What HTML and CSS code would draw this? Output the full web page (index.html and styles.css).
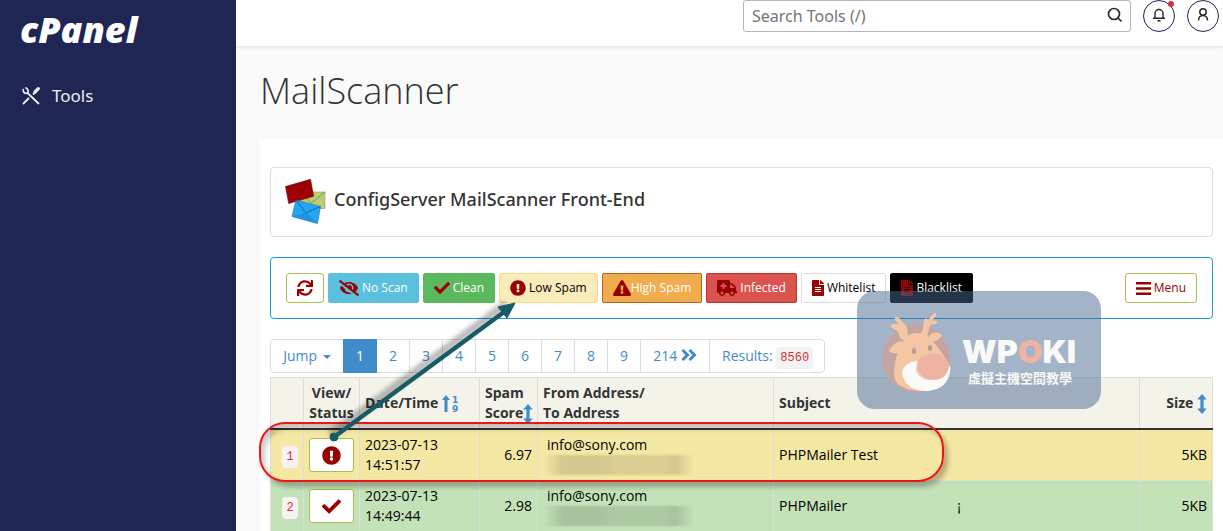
FILE: index.html
```html
<!DOCTYPE html>
<html lang="en">
<head>
  <meta charset="utf-8">
  <title>cPanel - MailScanner</title>
  <meta name="viewport" content="width=device-width, initial-scale=1">
  <link rel="stylesheet" href="styles.css">
</head>
<body>
  <svg class="sprite" aria-hidden="true">
    <symbol id="i-sync" viewBox="0 0 512 512"><path d="M440.65 12.57l4 82.77A247.16 247.16 0 0 0 255.83 8C134.73 8 33.91 94.92 12.29 209.82A12 12 0 0 0 24.09 224h49.05a12 12 0 0 0 11.67-9.26 175.91 175.91 0 0 1 317-56.94l-101.46-4.86a12 12 0 0 0-12.57 12v47.41a12 12 0 0 0 12 12H500a12 12 0 0 0 12-12V12a12 12 0 0 0-12-12h-47.37a12 12 0 0 0-11.98 12.57zM255.83 432a175.61 175.61 0 0 1-146-77.8l101.8 4.87a12 12 0 0 0 12.57-12v-47.4a12 12 0 0 0-12-12H12a12 12 0 0 0-12 12V500a12 12 0 0 0 12 12h47.35a12 12 0 0 0 12-12.6l-4.15-82.57A247.17 247.17 0 0 0 255.83 504c121.11 0 221.93-86.92 243.55-201.82a12 12 0 0 0-11.8-14.18h-49.05a12 12 0 0 0-11.67 9.26A175.86 175.86 0 0 1 255.83 432z"/></symbol>
    <symbol id="i-eye" viewBox="0 0 640 512"><path d="M320 400c-75.85 0-137.25-58.71-142.9-133.11L72.2 185.82c-13.79 17.3-26.48 35.59-36.72 55.59a32.35 32.35 0 0 0 0 29.19C89.71 376.41 197.07 448 320 448c26.91 0 52.87-4 77.89-10.46L346 397.39a144.13 144.13 0 0 1-26 2.61zm313.82 58.1l-110.55-85.44a331.25 331.25 0 0 0 81.25-102.07 32.35 32.35 0 0 0 0-29.19C550.29 135.59 442.93 64 320 64a308.15 308.15 0 0 0-147.32 37.7L45.46 3.37A16 16 0 0 0 23 6.18L3.37 31.45A16 16 0 0 0 6.18 53.9l588.36 454.73a16 16 0 0 0 22.46-2.81l19.64-25.27a16 16 0 0 0-2.82-22.45zm-183.72-142l-39.3-30.38A94.75 94.75 0 0 0 416 256a94.76 94.76 0 0 0-121.31-92.21A47.65 47.65 0 0 1 304 192a46.64 46.64 0 0 1-1.54 10l-73.61-56.89A142.31 142.31 0 0 1 320 112a143.92 143.92 0 0 1 144 144c0 21.63-5.29 41.79-13.9 60.11z"/></symbol>
    <symbol id="i-check" viewBox="0 0 512 512"><path d="M173.898 439.404l-166.4-166.4c-9.997-9.997-9.997-26.206 0-36.204l36.203-36.204c9.997-9.998 26.207-9.998 36.204 0L192 312.69 432.095 72.596c9.997-9.997 26.207-9.997 36.204 0l36.203 36.204c9.997 9.997 9.997 26.206 0 36.204l-294.4 294.401c-9.998 9.997-26.207 9.997-36.204-.001z"/></symbol>
    <symbol id="i-alert" viewBox="0 0 512 512"><path d="M504 256c0 136.997-111.043 248-248 248S8 392.997 8 256C8 119.083 119.043 8 256 8s248 111.083 248 248zm-248 50c-25.405 0-46 20.595-46 46s20.595 46 46 46 46-20.595 46-46-20.595-46-46-46zm-43.673-165.346l7.418 136c.347 6.364 5.609 11.346 11.982 11.346h48.546c6.373 0 11.635-4.982 11.982-11.346l7.418-136c.375-6.874-5.098-12.654-11.982-12.654h-63.383c-6.884 0-12.356 5.78-11.981 12.654z"/></symbol>
    <symbol id="i-warn" viewBox="0 0 576 512"><path d="M569.517 440.013C587.975 472.007 564.806 512 527.94 512H48.054c-36.937 0-59.999-40.055-41.577-71.987L246.423 23.985c18.467-32.009 64.72-31.951 83.154 0l239.94 416.028zM288 354c-25.405 0-46 20.595-46 46s20.595 46 46 46 46-20.595 46-46-20.595-46-46-46zm-43.673-165.346l7.418 136c.347 6.364 5.609 11.346 11.982 11.346h48.546c6.373 0 11.635-4.982 11.982-11.346l7.418-136c.375-6.874-5.098-12.654-11.982-12.654h-63.383c-6.884 0-12.356 5.78-11.981 12.654z"/></symbol>
    <symbol id="i-ambulance" viewBox="0 0 640 512"><path d="M624 352h-16V243.9c0-12.7-5.1-24.9-14.1-33.9L494 110.1c-9-9-21.2-14.1-33.9-14.1H416V48c0-26.5-21.5-48-48-48H48C21.5 0 0 21.5 0 48v320c0 26.5 21.5 48 48 48h16c0 53 43 96 96 96s96-43 96-96h128c0 53 43 96 96 96s96-43 96-96h48c8.8 0 16-7.2 16-16v-32c0-8.8-7.2-16-16-16zM160 464c-26.5 0-48-21.5-48-48s21.5-48 48-48 48 21.5 48 48-21.5 48-48 48zm144-248c0 4.4-3.6 8-8 8h-56v56c0 4.4-3.6 8-8 8h-48c-4.4 0-8-3.6-8-8v-56h-56c-4.4 0-8-3.6-8-8v-48c0-4.4 3.6-8 8-8h56v-56c0-4.4 3.6-8 8-8h48c4.4 0 8 3.6 8 8v56h56c4.4 0 8 3.6 8 8v48zm176 248c-26.5 0-48-21.5-48-48s21.5-48 48-48 48 21.5 48 48-21.5 48-48 48zm80-208H416V144h44.1l99.9 99.9V256z"/></symbol>
    <symbol id="i-file" viewBox="0 0 384 512"><path d="M224 136V0H24C10.7 0 0 10.7 0 24v464c0 13.3 10.7 24 24 24h336c13.3 0 24-10.7 24-24V160H248c-13.2 0-24-10.8-24-24zm64 236c0 6.6-5.4 12-12 12H108c-6.6 0-12-5.4-12-12v-8c0-6.6 5.4-12 12-12h168c6.6 0 12 5.4 12 12v8zm0-64c0 6.6-5.4 12-12 12H108c-6.6 0-12-5.4-12-12v-8c0-6.6 5.4-12 12-12h168c6.6 0 12 5.4 12 12v8zm0-72v8c0 6.6-5.4 12-12 12H108c-6.6 0-12-5.4-12-12v-8c0-6.6 5.4-12 12-12h168c6.6 0 12 5.4 12 12zm96-114.1v6.1H256V0h6.1c6.4 0 12.5 2.5 17 7l97.9 98c4.5 4.5 7 10.6 7 16.9z"/></symbol>
    <symbol id="i-sort" viewBox="0 0 10 20"><path d="M5 0l4.800 5.500H6.600v9h3.200L5 20 .2 14.500h3.200v-9H.2z"/></symbol>
  </svg>

  <aside class="sidebar">
    <a class="logo" href="#">cPanel</a>
    <nav>
      <a class="nav-link" href="#">
        <svg class="line" width="18" height="18" viewBox="0 0 18 18" stroke-linecap="round">
          <path d="M5.500 6l11 10.500" stroke-width="1.800"/>
          <path d="M1.200 2.500c-.3 3 2 4.500 4.300 3.500 1.200-1.800.5-4.300-1.500-5" stroke-width="1.700"/>
          <path d="M1.500 16.500l5-5M11.500 7l2-2" stroke-width="1.800"/>
          <path d="M13 5l3.300-3.300" stroke-width="3.200"/>
        </svg>
        Tools
      </a>
    </nav>
  </aside>

  <main class="main">
    <header class="topbar">
      <form class="search">
        <input type="search" placeholder="Search Tools (/)" aria-label="Search Tools">
        <button type="button" aria-label="Search">
          <svg class="line" width="16" height="16" viewBox="0 0 16 16" stroke-width="1.700"><circle cx="7" cy="7" r="5.500"/><path d="M10.500 10.500l4 4"/></svg>
        </button>
      </form>
      <button class="round" type="button" aria-label="Notifications">
        <svg class="line" width="14" height="16" viewBox="0 0 14 16" stroke-width="1.400"><path d="M1 11.300h12M3 11V6.500a4 4 0 0 1 8 0V11M5.500 13.800h3"/></svg>
        <span class="dot"></span>
      </button>
      <button class="round" type="button" aria-label="Account">
        <svg class="line" width="14" height="16" viewBox="0 0 14 16" stroke-width="1.500"><circle cx="7" cy="5" r="3.200"/><path d="M2.500 13.500c0-3 2-5 4.500-5s4.500 2 4.500 5"/></svg>
      </button>
    </header>

    <h1>MailScanner</h1>

    <section class="panel">
      <div class="card brand">
        <svg width="41" height="46" viewBox="0 0 41 46">
          <g stroke-width=".6">
            <path d="M15 13h25v16.500H15z" fill="#b9cf72" stroke="#8fa24b"/>
            <path d="M15 13l11.500 11L40 13" fill="none" stroke="#5d7033"/>
            <path d="M.5 7.500l25-7.200 3.200 17L3.700 24.500z" fill="#9c0006" stroke="#7a0004"/>
            <path d="M11 21l24.500 6.500-3 17L7 37.500z" fill="#22a5f5" stroke="#1c6fa8"/>
            <path d="M7 37.500l14-4 11.500 11z" fill="#1c94e0"/>
            <path d="M11 21l10 13 14.500-6.500" fill="none" stroke="#123f66"/>
          </g>
        </svg>
        <h2>ConfigServer MailScanner Front-End</h2>
      </div>

      <div class="card toolbar">
        <button class="btn refresh" type="button" aria-label="Refresh"><svg width="16" height="16"><use href="#i-sync"/></svg></button>
        <button class="btn noscan" type="button"><svg width="20" height="16"><use href="#i-eye"/></svg>No Scan</button>
        <button class="btn clean" type="button"><svg width="16" height="16"><use href="#i-check"/></svg>Clean</button>
        <button class="btn low" type="button"><svg width="16" height="16"><use href="#i-alert"/></svg>Low Spam</button>
        <button class="btn high" type="button"><svg width="18" height="16"><use href="#i-warn"/></svg>High Spam</button>
        <button class="btn infected" type="button"><svg width="20" height="16"><use href="#i-ambulance"/></svg>Infected</button>
        <button class="btn white" type="button"><svg width="12" height="16"><use href="#i-file"/></svg>Whitelist</button>
        <button class="btn black" type="button"><svg width="12" height="16"><use href="#i-file"/></svg>Blacklist</button>
        <button class="btn menu" type="button"><svg width="15" height="13" viewBox="0 0 15 13"><path d="M0 0h15v2.500H0zM0 5.200h15v2.500H0zM0 10.400h15v2.500H0z"/></svg>Menu</button>
      </div>

      <nav class="pages" aria-label="Pages">
        <a class="jump" href="#">Jump <span class="caret"></span></a>
        <a class="current" href="#">1</a>
        <a href="#">2</a>
        <a href="#">3</a>
        <a href="#">4</a>
        <a href="#">5</a>
        <a href="#">6</a>
        <a href="#">7</a>
        <a href="#">8</a>
        <a href="#">9</a>
        <a class="last" href="#">214 <svg class="line" width="16" height="12" viewBox="0 0 16 12" stroke-width="3"><path d="M1.500 1l5 5-5 5M8.500 1l5 5-5 5"/></svg></a>
        <span class="results">Results: <code>8560</code></span>
      </nav>

      <table>
        <colgroup><col class="c-num"><col class="c-view"><col class="c-date"><col class="c-score"><col class="c-addr"><col><col class="c-size"></colgroup>
        <thead>
          <tr>
            <th></th>
            <th class="mid">View/<br>Status</th>
            <th>Date/Time
              <svg class="sort" width="18" height="20" viewBox="0 0 18 20"><path d="M4 1l4 5H5.500v12h-3V6H0z"/><text x="10" y="9">1</text><text x="10" y="18">9</text></svg>
            </th>
            <th class="score">Spam<br>Score<svg class="sort" width="10" height="20"><use href="#i-sort"/></svg></th>
            <th>From Address/<br>To Address</th>
            <th>Subject</th>
            <th class="num">Size <svg class="sort" width="10" height="20"><use href="#i-sort"/></svg></th>
          </tr>
        </thead>
        <tbody>
          <tr class="row-low">
            <td class="mid"><code>1</code></td>
            <td class="mid"><button class="view" type="button" aria-label="View low spam message"><svg width="19" height="19"><use href="#i-alert"/></svg></button></td>
            <td>2023-07-13<br>14:51:57</td>
            <td class="num">6.97</td>
            <td class="addr">info@sony.com<span class="hidden-addr"></span></td>
            <td>PHPMailer Test</td>
            <td class="num">5KB</td>
          </tr>
          <tr class="row-clean">
            <td class="mid"><code>2</code></td>
            <td class="mid"><button class="view" type="button" aria-label="View clean message"><svg width="19" height="19"><use href="#i-check"/></svg></button></td>
            <td>2023-07-13<br>14:49:44</td>
            <td class="num">2.98</td>
            <td class="addr">info@sony.com<span class="hidden-addr"></span></td>
            <td><span class="subject"><span>PHPMailer</span><span>¡</span></span></td>
            <td class="num">5KB</td>
          </tr>
        </tbody>
      </table>
    </section>
  </main>

  <!-- tutorial callouts over the page -->
  <div class="ring"></div>
  <svg class="arrow" width="200" height="150" viewBox="0 0 200 150">
    <path class="shade" d="M10 136L186 5"/>
    <path d="M14 138L184 13" stroke="#175b67" stroke-width="4.500"/>
    <circle cx="14" cy="138" r="4" class="head"/>
    <path d="M195 4l-8 15-9-11z" class="head"/>
  </svg>

  <div class="watermark">
    <svg width="70" height="84" viewBox="0 -2 70 84">
      <circle cx="34" cy="48" r="34" fill="#c4a5a1"/>
      <g fill="#f5c6a3">
        <path d="M18 28l-2-7-6-3c-2-1-1-4 1-4l5 0-3-5c-1-2 2-3 4-1l8 9 1 10-4 4zM38 26l3-7 1-9c1-2 3-2 4 0l6-7c2-1 3 1 2 3l-4 4 4 1c2 1 1 3-1 3l-5 1-3 12z"/>
        <path d="M20 31c-6 0-11 5-13 11 6 2 11 2 14-2zM46 28c3-6 8-8 14-3-3 6-8 8-13 6z"/>
        <path d="M24 27c5-5 16-5 21-1 6 6 12 11 15 17 5 7 8 12 8 17-2 13-12 20-25 21-9 0-16-1-22-4-8-3-9-10-9-15 1-14 5-27 12-35z"/>
      </g>
      <path d="M35 51c-9 1-14 5-15 12 1 8 7 15 16 17 12 3 23-1 28-8 4-6 5-12 4-17-2 8-7 12-14 14-10 3-18-2-20-9z" fill="#f9faf8"/>
      <path d="M36 50c5-5 11-7 18-6 8 1 13 7 13 13-1 7-7 13-15 13-7 0-13-4-16-10z" fill="#eeb3a2"/>
      <g fill="#b59f9e"><ellipse cx="32" cy="41" rx="2.200" ry="3"/><ellipse cx="48" cy="38" rx="2.200" ry="3"/></g>
    </svg>
    <div>
      <div class="wm-name">WP<span>O</span>KI</div>
      <div class="wm-sub" lang="zh-Hant">虛擬主機空間教學</div>
    </div>
  </div>
</body>
</html>
```
FILE: styles.css
```css
* {
  box-sizing: border-box;
}

body {
  margin: 0;
  display: grid;
  grid-template-columns: 236px 1fr;
  position: relative;
  background: #fafafa;
  color: #000;
  font: 14px/20px "Open Sans", "Noto Sans", sans-serif;
}

html,
body {
  height: 100%;
  overflow: hidden;
}

a {
  color: #428bca;
  text-decoration: none;
}

button {
  font-family: inherit;
  padding: 0;
  color: inherit;
  cursor: pointer;
}

svg {
  fill: currentColor;
  flex: none;
}

.line {
  fill: none;
  stroke: currentColor;
}

.sprite {
  display: none;
}

/* sidebar */

.sidebar {
  background: #1f2654;
  padding: 12px 20px;
}

.logo {
  display: block;
  color: #fff;
  font: italic 800 36px/36px "Open Sans", sans-serif;
}

.nav-link {
  display: flex;
  align-items: center;
  gap: 12px;
  margin-top: 36px;
  padding-left: 2px;
  color: #eee;
  font: 17px/24px "Noto Sans", sans-serif;
}

/* top bar */

.main {
  min-width: 0;
  overflow: hidden;
}

.topbar {
  display: flex;
  justify-content: flex-end;
  gap: 12px;
  height: 46px;
  padding-right: 4px;
  background: #fff;
  box-shadow: 0 1px 3px #ddd;
}

.search {
  display: flex;
  align-items: center;
  width: 388px;
  height: 32px;
  padding: 0 7px 0 8px;
  border: 1px solid #b3b3c4;
  border-radius: 3px;
}

.search input {
  flex: 1;
  min-width: 0;
  padding: 0;
  border: 0;
  outline: 0;
  background: none;
  font: 16px/24px "Noto Sans", sans-serif;
}

.search input::placeholder {
  color: #757575;
}

.search button {
  display: flex;
  border: 0;
  background: none;
  color: #24292e;
  padding-bottom: 3px;
}

.round {
  position: relative;
  display: flex;
  align-items: center;
  justify-content: center;
  width: 32px;
  height: 32px;
  padding-bottom: 2px;
  border: 1px solid #1f2654;
  border-radius: 50%;
  background: #fff;
  color: #24292e;
}

.dot {
  position: absolute;
  top: 0;
  right: 0;
  width: 6px;
  height: 6px;
  border-radius: 50%;
  background: #d2323e;
}

h1 {
  margin: 20px 0 23px 24px;
  color: #333;
  font-size: 36px;
  font-weight: 300;
  line-height: 50px;
}

/* content */

.panel {
  margin-left: 24px;
  padding: 28px 10px 0;
  background: #fff;
}

.card {
  display: flex;
  align-items: center;
  margin-bottom: 20px;
  border: 1px solid #ddd;
  border-radius: 4px;
}

.brand {
  height: 70px;
  gap: 8px;
  padding: 0 14px;
}

h2 {
  margin: 0;
  padding-bottom: 6px;
  color: #333;
  font: 500 18px/24px "Noto Sans", sans-serif;
}

.toolbar {
  gap: 4px;
  padding: 15px;
  border-color: #179bd7;
}

.btn {
  display: flex;
  align-items: center;
  gap: 3px;
  height: 30px;
  padding: 0 10px;
  border: 1px solid #ddd;
  border-radius: 2px;
  background: #fff;
  font-size: 12px;
  line-height: 20px;
  white-space: nowrap;
}

.btn svg {
  color: #990000;
}

.refresh,
.menu {
  border-color: #a9bf4e;
  border-radius: 3px;
}

.noscan {
  border-color: #5bc0de;
  background: #5bc0de;
  color: #fff;
}

.clean {
  border-color: #5cb85c;
  background: #5cb85c;
  color: #fff;
}

.low {
  border-color: #f5dc85;
  background: #faebba;
}

.high {
  gap: 0;
  border-color: #b9651b;
  background: #f0ad4e;
  color: #fff;
}

.infected {
  border-color: #c9302c;
  background: #d9534f;
  color: #fff;
}

.black {
  border-color: #000;
  background: #000;
  color: #fff;
}

.menu {
  margin-left: auto;
  color: #990000;
}

/* pagination */

.pages {
  display: flex;
  width: max-content;
  height: 34px;
  margin-bottom: 4px;
  border: 1px solid #ddd;
  border-radius: 4px;
  color: #428bca;
  line-height: 32px;
}

.pages a {
  width: 33px;
  border-right: 1px solid #ddd;
  text-align: center;
}

.pages .jump {
  width: 72px;
  border-right: 0;
}

.pages .current {
  width: 34px;
  margin: -1px 0;
  border: 0;
  background: #428bca;
  color: #fff;
  line-height: 34px;
}

.pages .last {
  width: 69px;
}

.results {
  padding: 0 11px 0 12px;
}

.caret {
  display: inline-block;
  margin-left: 2px;
  border: 4px solid transparent;
  border-top-color: currentColor;
  border-bottom: 0;
  vertical-align: middle;
}

code {
  padding: 4px;
  border-radius: 4px;
  background: #f5f2f4;
  color: #c33;
  font: 12px/16px "Liberation Mono", monospace;
}

/* message list */

table {
  width: 100%;
  table-layout: fixed;
  border-collapse: collapse;
}

.c-num { width: 33px }
.c-view { width: 56px }
.c-date { width: 120px }
.c-score { width: 58px }
.c-addr { width: 236px }
.c-size { width: 73px }

th,
td {
  height: 51px;
  padding: 5px;
  border: 1px solid #ddd;
  text-align: left;
}

th {
  background: #f4f3ea;
  color: #333;
  border-bottom: 2px solid #333;
}

.mid {
  padding: 5px 0;
  text-align: center;
}

td:first-child {
  padding-left: 6px;
}

.num {
  text-align: right;
}

.score {
  padding-right: 0;
}

.sort {
  color: #428bca;
  vertical-align: middle;
}

.score .sort {
  margin: -1px -4px -1px 0;
}

.sort text {
  font: bold 9px "DejaVu Sans", sans-serif;
}

.row-low td {
  background: #f5e8a4;
}

.row-clean td {
  background: #c3e2b7;
}

.view {
  display: inline-flex;
  align-items: center;
  justify-content: center;
  width: 45px;
  height: 34px;
  border: 1px solid #a9bf4e;
  border-radius: 3px;
  background: #fff;
  color: #990000;
  vertical-align: middle;
}

.addr {
  padding-left: 9px;
}

.hidden-addr {
  display: block;
  width: 150px;
  height: 20px;
  margin-left: -3px;
  background: linear-gradient(90deg, #0000, #0002 12%, #0002 38%, #0000001c 50%, #0000001c 78%, #0002 88%, #0000);
  filter: blur(1px);
}

.subject {
  display: flex;
  gap: 110px;
}

/* callouts */

.ring {
  position: absolute;
  left: 259px;
  top: 422px;
  width: 685px;
  height: 60px;
  border: 2px solid #f01414;
  border-radius: 26px;
  box-shadow: 4px 5px 5px #0004, inset 4px 5px 5px #0003;
}

.arrow {
  position: absolute;
  left: 320px;
  top: 299px;
  fill: none;
}

.head {
  fill: #175b67;
  stroke: #175b67;
}

.shade {
  stroke: #0004;
  stroke-width: 8px;
  filter: blur(2px);
}

.watermark {
  position: absolute;
  left: 857px;
  top: 291px;
  display: flex;
  align-items: center;
  gap: 10px;
  width: 244px;
  height: 118px;
  padding-left: 25px;
  border-radius: 18px;
  background: rgba(74, 105, 145, .5);
  color: #f9faf8;
}

.wm-name {
  margin-top: 24px;
  font: 900 32px/32px Inter, sans-serif;
}

.wm-name span {
  color: #eeb3a2;
}

.wm-sub {
  padding-left: 6px;
  font: bold 13px/20px "Noto Sans CJK TC", sans-serif;
}
```
